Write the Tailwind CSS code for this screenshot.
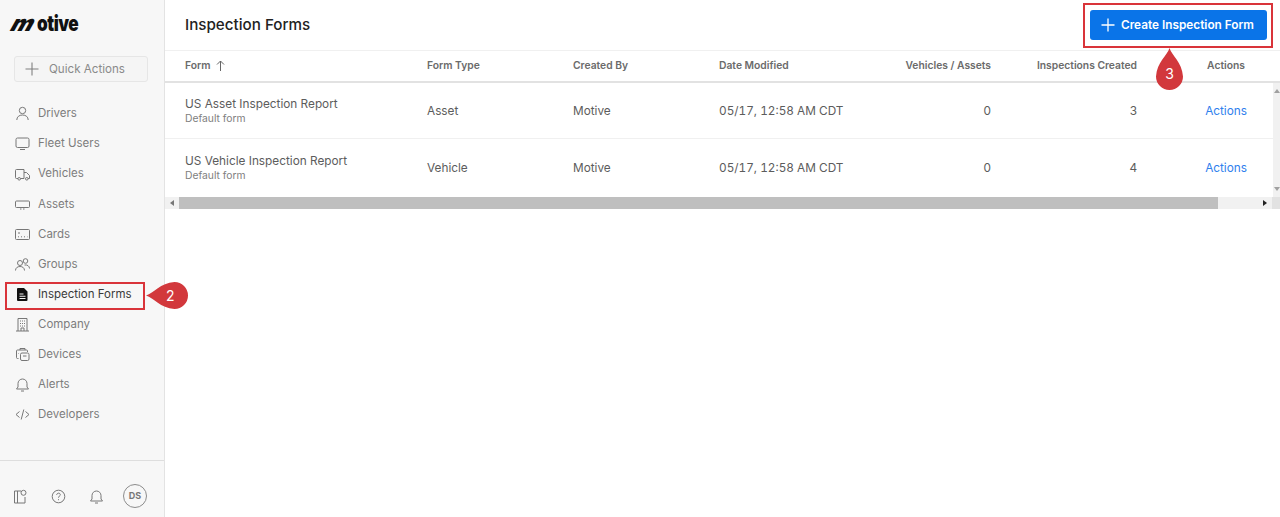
<!DOCTYPE html>
<html lang="en">
<head>
  <meta charset="UTF-8">
  <title>Inspection Forms</title>
  <script src="https://cdn.jsdelivr.net/npm/@tailwindcss/browser@4"></script>
</head>
<body class="h-[517px] w-[1280px] overflow-hidden bg-white font-['Inter',sans-serif] text-[11.8px] text-[#5c5c5c]">
  <div class="relative flex h-full">

    <!-- sidebar -->
    <aside class="flex h-full w-[165px] shrink-0 flex-col border-r border-[#e3e3e3] bg-[#f7f7f7]">
      <div class="flex h-[46px] items-center pl-[13px] text-[22px] leading-none font-black tracking-[-0.6px] text-[#111]">
        <span class="mr-[4px] inline-block origin-left -skew-x-[28deg] scale-x-[1.05]">m</span><span class="inline-block origin-left scale-x-[0.78]">otive</span>
      </div>
      <div class="mx-[14px] mt-[10px] flex h-[26px] w-[134px] items-center rounded-[3px] border border-[#e6e6e6] bg-[#f5f5f5] pl-[10px] text-[#8a8a8a]">
        <svg class="h-[14px] w-[14px]" viewBox="0 0 14 14" fill="none" stroke="#808080" stroke-width="1.1"><path d="M7 0.5v13M0.5 7h13"/></svg>
        <span class="ml-[10px] pt-[2px] text-[11.6px]">Quick Actions</span>
      </div>

      <nav class="mt-[16.8px] flex flex-col text-[11.5px] text-[#7d7d7d]">
        <a class="flex h-[30.1px] items-center pl-[15px]">
          <svg class="mr-[8px] h-[15px] w-[15px]" viewBox="0 0 15 15" fill="none" stroke="#777" stroke-width="1"><circle cx="7.5" cy="4.5" r="3.2"/><path d="M1.8 14c0-3.2 2.4-5 5.7-5s5.700 1.800 5.700 5"/></svg>
          Drivers
        </a>
        <a class="flex h-[30.1px] items-center pl-[15px]">
          <svg class="mr-[8px] h-[15px] w-[15px]" viewBox="0 0 15 15" fill="none" stroke="#777" stroke-width="1"><rect x="1" y="2" width="13" height="9.500" rx="1.500"/><path d="M5 13.500h5"/></svg>
          Fleet Users
        </a>
        <a class="flex h-[30.1px] items-center pl-[15px]">
          <svg class="mr-[8px] h-[15px] w-[15px]" viewBox="0 0 15 15" fill="none" stroke="#777" stroke-width="1"><path d="M3 11.500H1.500a1 1 0 0 1-1-1V3.500a1 1 0 0 1 1-1H9v9H5.500M9 5.500h2.500l3 3v3h-1.500"/><circle cx="4.200" cy="11.800" r="1.300"/><circle cx="11.800" cy="11.800" r="1.300"/></svg>
          Vehicles
        </a>
        <a class="flex h-[30.1px] items-center pl-[15px]">
          <svg class="mr-[8px] h-[15px] w-[15px]" viewBox="0 0 15 15" fill="none" stroke="#777" stroke-width="1"><rect x="0.500" y="4" width="14" height="6.500" rx="1"/><path d="M5 12h1.500M8 12h1.500"/></svg>
          Assets
        </a>
        <a class="flex h-[30.1px] items-center pl-[15px]">
          <svg class="mr-[8px] h-[15px] w-[15px]" viewBox="0 0 15 15" fill="none" stroke="#777" stroke-width="1"><rect x="0.500" y="2.500" width="14" height="10" rx="1"/><path d="M3 6h2M3 9.800h1M6 9.800h1M9 9.800h1M12 9.800h.5"/></svg>
          Cards
        </a>
        <a class="flex h-[30.1px] items-center pl-[15px]">
          <svg class="mr-[8px] h-[15px] w-[15px]" viewBox="0 0 15 15" fill="none" stroke="#777" stroke-width="1"><circle cx="5" cy="6" r="2.500"/><circle cx="10.500" cy="4" r="2.300"/><path d="M.5 13.500c0-2.600 2-4 4.500-4s4.500 1.400 4.500 4M9.500 8c2.700-.5 5 1 5 3.500"/></svg>
          Groups
        </a>
        <a class="flex h-[30.1px] items-center pl-[15px] text-[#3a3a3a]">
          <svg class="mr-[8px] h-[15px] w-[15px]" viewBox="0 0 15 15"><path fill="#111" fill-rule="evenodd" d="M3 1h6l3.500 3.500V13a1 1 0 0 1-1 1H3a1 1 0 0 1-1-1V2a1 1 0 0 1 1-1zM4.500 6.500v1h4v-1zM4.500 8.800v1h6v-1zM4.500 11v1h6v-1z"/></svg>
          Inspection Forms
        </a>
        <a class="flex h-[30.1px] items-center pl-[15px]">
          <svg class="mr-[8px] h-[15px] w-[15px]" viewBox="0 0 15 15" fill="none" stroke="#777" stroke-width="1"><path d="M3 14V1.500h9V14M1 14h13M5 4h1M7 4h1M9 4h1M5 6.500h1M7 6.500h1M9 6.500h1M5 9h1M7 9h1M9 9h1M6 14v-3h3v3"/></svg>
          Company
        </a>
        <a class="flex h-[30.1px] items-center pl-[15px]">
          <svg class="mr-[8px] h-[15px] w-[15px]" viewBox="0 0 15 15" fill="none" stroke="#777" stroke-width="1"><path d="M5 3V1.500h5V3M3.500 11.500h-1a1 1 0 0 1-1-1V4a1 1 0 0 1 1-1h9a1 1 0 0 1 1 1v1"/><rect x="5.500" y="6" width="8.500" height="7.500" rx="1.500"/><path d="M3.500 6.500h.5M8 9h3.500"/></svg>
          Devices
        </a>
        <a class="flex h-[30.1px] items-center pl-[15px]">
          <svg class="mr-[8px] h-[15px] w-[15px]" viewBox="0 0 15 15" fill="none" stroke="#777" stroke-width="1"><path d="M1.500 12h12l-1.500-2V6.500a4.500 4.500 0 0 0-9 0V10zM6 14h3"/></svg>
          Alerts
        </a>
        <a class="flex h-[30.1px] items-center pl-[15px]">
          <svg class="mr-[8px] h-[15px] w-[15px]" viewBox="0 0 15 15" fill="none" stroke="#777" stroke-width="1"><path d="M4.500 4.500 1 7.500l3.500 3M10.500 4.500l3.500 3-3.500 3M8.800 2.500l-2.600 10"/></svg>
          Developers
        </a>
      </nav>

      <div class="mt-auto flex h-[57px] items-center border-t border-[#dedede] pt-[14px] pl-[13px]">
        <svg class="h-[15px] w-[15px]" viewBox="0 0 15 15" fill="none" stroke="#777" stroke-width="1"><path d="M8 2H1.500v12H12V8M4.500 2v12"/><circle cx="10.500" cy="3.800" r="2.500"/></svg>
        <svg class="ml-[23px] h-[15px] w-[15px]" viewBox="0 0 15 15" fill="none" stroke="#777" stroke-width="1"><circle cx="7.500" cy="7.500" r="6.300"/><path d="M5.700 5.900c0-2.300 3.600-2.300 3.600-.2 0 1.400-1.800 1.500-1.800 3M7.500 10.200v1"/></svg>
        <svg class="ml-[23px] h-[15px] w-[15px]" viewBox="0 0 15 15" fill="none" stroke="#777" stroke-width="1"><path d="M1.500 12h12l-1.500-2V6.500a4.500 4.500 0 0 0-9 0V10zM6 14h3"/></svg>
        <span class="ml-[19px] flex h-[24px] w-[24px] items-center justify-center rounded-full border border-[#8c8c8c] text-[9px] font-bold text-[#777]">DS</span>
      </div>
    </aside>

    <!-- main -->
    <main class="flex min-w-0 flex-1 flex-col">
      <header class="flex h-[51px] shrink-0 items-center justify-between border-b border-[#f0f0f0] pr-[13px] pl-[20px]">
        <h1 class="-mt-[1px] text-[15.2px] leading-none font-medium text-[#222]">Inspection Forms</h1>
        <button class="flex h-[30px] w-[177px] items-center rounded-[3px] bg-[#0a74e8] pl-[11px] text-[11.8px] font-semibold text-white">
          <svg class="mr-[6px] h-[14px] w-[14px]" viewBox="0 0 14 14" fill="none" stroke="#fff" stroke-width="1.300"><path d="M7 0.500v13M0.500 7h13"/></svg>
          <span class="pt-[1px]">Create Inspection Form</span>
        </button>
      </header>

      <div class="grid h-[32px] shrink-0 grid-cols-[262px_146px_146px_146px_126px_146px_143px] items-center border-b-2 border-[#e2e2e2] pb-[1px] text-[10.3px] font-semibold text-[#6b6b6b]">
        <div class="flex items-center pl-[20px]">Form
          <svg class="ml-[6px] h-[11px] w-[9px]" viewBox="0 0 9 11" fill="none" stroke="#666" stroke-width="1"><path d="M4.500 11V1M1 4.500l3.500-3.500L8 4.500"/></svg>
        </div>
        <div>Form Type</div>
        <div>Created By</div>
        <div>Date Modified</div>
        <div class="text-right">Vehicles / Assets</div>
        <div class="text-right">Inspections Created</div>
        <div class="pr-[35px] text-right">Actions</div>
      </div>

      <div class="relative">
        <div class="grid h-[56px] grid-cols-[262px_146px_146px_146px_126px_146px_143px] items-center border-b border-[#f0f0f0] pt-[2px]">
          <div class="-mt-[2px] pl-[20px]">
            <div class="leading-[14px]">US Asset Inspection Report</div>
            <div class="text-[10.3px] leading-[14px] text-[#808080]">Default form</div>
          </div>
          <div>Asset</div>
          <div>Motive</div>
          <div class="tabular-nums">05/17, 12:58 AM CDT</div>
          <div class="text-right">0</div>
          <div class="text-right">3</div>
          <div class="pr-[33px] text-right text-[#2f80ed]">Actions</div>
        </div>
        <div class="grid h-[58px] grid-cols-[262px_146px_146px_146px_126px_146px_143px] items-center pt-[2px]">
          <div class="-mt-[2px] pl-[20px]">
            <div class="leading-[14px]">US Vehicle Inspection Report</div>
            <div class="text-[10.3px] leading-[14px] text-[#808080]">Default form</div>
          </div>
          <div>Vehicle</div>
          <div>Motive</div>
          <div class="tabular-nums">05/17, 12:58 AM CDT</div>
          <div class="text-right">0</div>
          <div class="text-right">4</div>
          <div class="pr-[33px] text-right text-[#2f80ed]">Actions</div>
        </div>
        <!-- vertical scrollbar -->
        <div class="absolute top-0 right-0 flex h-full w-[7px] flex-col items-center justify-between bg-[#f1f1f1] py-[6px]">
          <span class="h-0 w-0 border-x-[3px] border-b-[4px] border-x-transparent border-b-[#a0a0a0]"></span>
          <span class="h-0 w-0 border-x-[3px] border-t-[4px] border-x-transparent border-t-[#a0a0a0]"></span>
        </div>
      </div>

      <!-- horizontal scrollbar -->
      <div class="flex h-[12px] items-center bg-[#f1f1f1]">
        <div class="flex w-[14px] justify-center"><span class="h-0 w-0 border-y-[3px] border-r-[4px] border-y-transparent border-r-[#777]"></span></div>
        <div class="h-full w-[1039px] bg-[#bfbfbf]"></div>
        <div class="flex flex-1 justify-end pr-[5px]"><span class="h-0 w-0 border-y-[3px] border-l-[4px] border-y-transparent border-l-[#222]"></span></div>
        <div class="h-full w-[8px] bg-[#e2e2e2]"></div>
      </div>
    </main>

    <!-- tutorial callouts laid over the page -->
    <div class="absolute top-[282px] left-[5px] h-[28px] w-[140px] border-2 border-[#d9343a]"></div>
    <div class="absolute top-[282px] left-[146px] flex h-[27px] items-center">
      <svg class="h-[27px] w-[42px]" viewBox="0 0 42 27"><path fill="#d2383c" d="M0 13.500 C8 11 14 1 28.500 0 a13.500 13.500 0 0 1 0 27 C14 26 8 16 0 13.500z"/></svg>
      <span class="absolute left-[20px] text-[14px] text-white">2</span>
    </div>
    <div class="absolute top-[3px] left-[1083px] h-[45px] w-[190px] border-2 border-[#d9343a]"></div>
    <div class="absolute top-[48px] left-[1156px] flex w-[27px] justify-center">
      <svg class="h-[42px] w-[27px]" viewBox="0 0 27 42"><path fill="#d2383c" d="M13.500 0 C16 8 26 14 27 28.500 a13.500 13.500 0 0 1-27 0 C1 14 11 8 13.500 0z"/></svg>
      <span class="absolute top-[15px] text-[14px] text-white">3</span>
    </div>
  </div>
</body>
</html>
